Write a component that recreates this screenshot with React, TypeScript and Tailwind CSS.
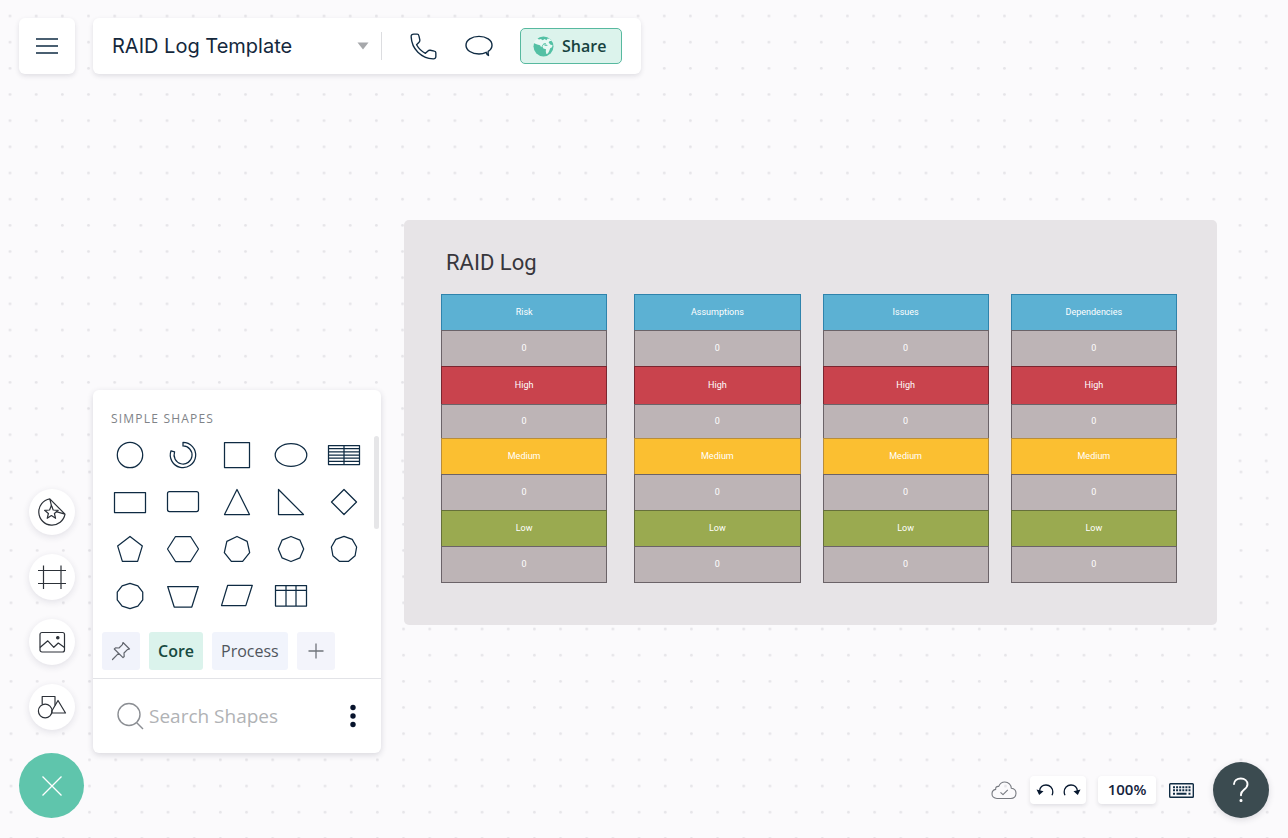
import type { ReactNode } from "react";

const INK = "#0f2b43";

function DotGrid({ id, x, y }: { id: string; x: number; y: number }) {
  return (
    <svg className="block h-full w-full" aria-hidden="true">
      <defs>
        <pattern id={id} x={x - 13} y={y - 13} width="26.17" height="26.17" patternUnits="userSpaceOnUse">
          <circle cx="13" cy="13" r="1.4" fill="#e5e4e8" />
        </pattern>
      </defs>
      <rect width="100%" height="100%" fill={`url(#${id})`} />
    </svg>
  );
}

function ngon(sides: number, rx: number, ry: number, cy = 15) {
  return Array.from({ length: sides }, (_, i) => {
    const a = (i * 2 * Math.PI) / sides - Math.PI / 2;
    return `${(18 + rx * Math.cos(a)).toFixed(2)},${(cy + ry * Math.sin(a)).toFixed(2)}`;
  }).join(" ");
}

const shapes: { name: string; art: ReactNode }[] = [
  { name: "Circle", art: <circle cx="18" cy="15" r="12.7" /> },
  { name: "Arc", art: <path d="M18 2.3A12.7 12.7 0 1 1 6 10.8L9.6 11.9A9 9 0 1 0 18 6Z" /> },
  { name: "Square", art: <rect x="5.5" y="2.5" width="25" height="25" /> },
  { name: "Ellipse", art: <ellipse cx="18" cy="15" rx="15.8" ry="11.4" /> },
  { name: "List", art: <path d="M2.5 5.5h31v19h-31zM18 5.5v19M2.5 8.7h31M2.5 11.8h31M2.5 15h31M2.5 18.2h31M2.5 21.3h31" /> },
  { name: "Rectangle", art: <rect x="2.5" y="5.5" width="31" height="20" /> },
  { name: "Rounded rectangle", art: <rect x="2.5" y="4.5" width="31" height="20" rx="2" /> },
  { name: "Triangle", art: <path d="M18 2.5L30.5 27.5H5.5Z" /> },
  { name: "Right triangle", art: <path d="M5.5 2.5V27.5H30.5Z" /> },
  { name: "Diamond", art: <path d="M18 2.5L30.5 15L18 27.5L5.5 15Z" /> },
  { name: "Pentagon", art: <polygon points={ngon(5, 13, 13.8, 16.2)} /> },
  { name: "Hexagon", art: <path d="M2.5 15L10.5 2.5H25.5L33.5 15L25.5 27.5H10.5Z" /> },
  { name: "Heptagon", art: <polygon points={ngon(7, 13, 13.1, 15.6)} /> },
  { name: "Octagon", art: <polygon points={ngon(8, 12.7, 12.5)} /> },
  { name: "Nonagon", art: <polygon points={ngon(9, 12.8, 12.9, 15.3)} /> },
  { name: "Decagon", art: <polygon points={ngon(10, 13.4, 12.6)} /> },
  { name: "Trapezoid", art: <path d="M2.7 5.5H33.3L26.8 26H9.2Z" /> },
  { name: "Parallelogram", art: <path d="M8.7 4.3H33.3L26.8 24.6H2.5Z" /> },
  { name: "Table", art: <path d="M2.5 4.5h31v20.5h-31zM2.5 9.3h31M13 4.5v20.5M23 4.5v20.5" /> },
];

type Row = { key: string; label: string; cell: string };

const rows: Row[] = [
  { key: "r1", label: "0", cell: "h-9 bg-[#bdb4b6] border-[#6b6368]" },
  { key: "r2", label: "High", cell: "h-[38px] bg-[#c9434d] border-[#7a2630]" },
  { key: "r3", label: "0", cell: "h-[34px] bg-[#bdb4b6] border-[#6b6368]" },
  { key: "r4", label: "Medium", cell: "h-9 bg-[#fbbf31] border-[#b88d3a]" },
  { key: "r5", label: "0", cell: "h-9 bg-[#bdb4b6] border-[#6b6368]" },
  { key: "r6", label: "Low", cell: "h-9 bg-[#9aaa50] border-[#66703a]" },
  { key: "r7", label: "0", cell: "h-[37px] border-b bg-[#bdb4b6] border-[#6b6368]" },
];

function RaidColumn({ title, className = "" }: { title: string; className?: string }) {
  return (
    <table className={`flex-1 basis-0 table-fixed border-separate border-spacing-0 text-center text-[9px] leading-3 text-white ${className}`}>
      <thead className="block">
        <tr className="flex">
          <th scope="col" className="flex h-9 flex-1 items-center justify-center border-x border-t border-[#2f83ac] bg-[#5cb1d3] pb-0.5 font-normal">
            {title}
          </th>
        </tr>
      </thead>
      <tbody className="block">
        {rows.map((r) => (
          <tr key={r.key} className="flex">
            <td className={`flex flex-1 items-center justify-center border-x border-t pb-0.5 ${r.cell}`}>{r.label}</td>
          </tr>
        ))}
      </tbody>
    </table>
  );
}

function RailButton({ label, children }: { label: string; children: ReactNode }) {
  return (
    <button aria-label={label} className="flex size-[46px] items-center justify-center rounded-full bg-white shadow-[0_2px_7px_rgba(40,40,70,0.12)]">
      <svg width="30" height="30" viewBox="0 0 30 30" fill="none" stroke="#2c3138" strokeWidth="1.2" strokeLinejoin="round">
        {children}
      </svg>
    </button>
  );
}

function Header() {
  return (
    <header className="flex gap-[18px]">
      <button aria-label="Menu" className="flex size-14 items-center justify-center rounded-md bg-white shadow-[0_2px_5px_rgba(40,40,60,0.13)]">
        <svg width="24" height="18" viewBox="0 0 24 18" stroke={INK} strokeWidth="1.4">
          <path d="M1 2h22M1 9h22M1 16h22" />
        </svg>
      </button>
      <div className="flex h-14 items-center rounded-md bg-white px-[19px] shadow-[0_2px_5px_rgba(40,40,60,0.13)]">
        <button className="flex w-[257px] items-center justify-between text-left font-[Inter,sans-serif] text-xl leading-6 text-[#14283c]">
          RAID Log Template
          <svg width="12" height="8" viewBox="0 0 12 8" fill="#a6a8ab" aria-hidden="true">
            <path d="M.5 .5h11L6 7.5Z" />
          </svg>
        </button>
        <span className="ml-3 h-7 w-px bg-[#dcdde0]" />
        <button aria-label="Call" className="ml-7">
          <svg className="block" width="27" height="27" viewBox="0 0 28 28" fill="none" stroke={INK} strokeWidth="1.4" strokeLinejoin="round">
            <path d="M1.2 4C1 2.2 2.2 1.2 4 1.2H7.5C8.6 1.2 9 1.8 9.2 2.8L10.2 7.2C10.4 8.2 10.1 8.9 9.4 9.6L6.8 12.2C8.8 15.8 12.2 19.2 16 21.1L18.6 18.6C19.3 17.9 20 17.7 21 17.9L25.2 18.8C26.3 19 26.8 19.6 26.8 20.6V24.3C26.8 26 25.8 26.9 24.1 26.8C11.6 26.3 1.8 16.5 1.2 4Z" />
          </svg>
        </button>
        <button aria-label="Comments" className="ml-7">
          <svg className="block" width="28" height="22" viewBox="0 0 28 22" fill="none" stroke={INK} strokeWidth="1.4" strokeLinejoin="round">
            <path d="M21.2 17.3C19.1 18.4 16.7 19 14 19C6.8 19 1 15.2 1 10.2S6.8 1.4 14 1.4S27 5.2 27 10.2C27 12.6 25.6 14.8 23.2 16.4C22.9 17.9 23.1 19.2 23.5 20.5C22.2 19.8 21.5 18.7 21.2 17.3Z" />
          </svg>
        </button>
        <button className="ml-[27px] flex h-9 w-[102px] items-center gap-2 rounded-[5px] border border-[#57b99f] bg-[#dcf3ec] pl-3 text-base font-semibold text-[#16423f]">
          <svg width="21" height="21" viewBox="0 0 21 21" aria-hidden="true">
            <circle cx="10.5" cy="10.5" r="10" fill="#53c0a4" />
            <path d="M.6 6.9C1.300 4.800 2.500 3.300 4.200 2.400L6 3.600L7.800 2.900L9.800 4.200L11.600 3L13.400 4.200L14.600 2.400L17 3L18.600 5L16.800 4.900L15.600 6.300L17.200 8.500L19.600 9.300L19 11.200L17.200 12.300L16.200 15L14.900 17.600L13.300 17.900L12.800 15.600L13 13.200L10.400 12.400L9.400 10.600L10.500 8.800L13 8.300L12.600 7.100L10.600 7.600L9.200 9.500L8.200 11.200L7 9.300L4.200 8.400Z" fill="#e9f8f4" />
            <path d="M11 9.200L13 8.500L15 9.200L13 10Z" fill="#53c0a4" />
          </svg>
          Share
        </button>
      </div>
    </header>
  );
}

function Rail() {
  return (
    <nav aria-label="Insert" className="flex w-[65px] flex-col items-center gap-[19px]">
      <RailButton label="Stickers">
        <path d="M12.8 1.9A13.2 13.2 0 1 0 28 17.2L12.8 1.9ZM12.8 1.9L15.6 13.6L28 17.2" />
        <path fill="#fff" d="M14.4 8.4L16.2 13L21.2 13.3L17.4 16.5L18.6 21.3L14.4 18.6L10.2 21.3L11.4 16.5L7.6 13.3L12.6 13Z" />
      </RailButton>
      <RailButton label="Frame">
        <path d="M1 8.5h28M1 21.5h28M6.5 3.5v23.500M24 3.500v23.500" />
      </RailButton>
      <RailButton label="Image">
        <rect x="3" y="5.5" width="24.500" height="19.500" rx="2" />
        <path d="M3 20.500L10.800 13.800L16.800 20.300L21.300 16L27.500 20.500" />
        <circle cx="20.800" cy="10.800" r="1.200" fill="#2c3138" />
      </RailButton>
      <RailButton label="Shapes">
        <path d="M5.200 12.200V4.500H18V13.500" />
        <path d="M21 8.500L28.500 21H15L14.800 19Z" />
        <circle cx="8.200" cy="19" r="6.800" />
      </RailButton>
      <button aria-label="Close" className="mt-1 flex size-[65px] items-center justify-center rounded-full bg-[#5fc5ac]">
        <svg width="22" height="22" viewBox="0 0 22 22" stroke="#fff" strokeWidth="1.3">
          <path d="M1.500 1.500L20.500 20.500M20.500 1.500L1.500 20.500" />
        </svg>
      </button>
    </nav>
  );
}

function ShapesPanel() {
  return (
    <section aria-label="Shapes" className="mb-[65px] w-72 rounded-md bg-white shadow-[0_2px_6px_rgba(40,40,60,0.16)]">
      <h2 className="pt-5 pl-[18px] text-xs leading-[18px] tracking-[1.2px] text-[#808388]">SIMPLE SHAPES</h2>
      <div className="relative px-[10px] pt-[3px]">
        <div className="grid auto-rows-[47px] grid-cols-5">
          {shapes.map((s) => (
            <button key={s.name} aria-label={s.name} className="flex items-center justify-center">
              <svg width="36" height="30" viewBox="0 0 36 30" fill="none" stroke={INK} strokeWidth="1.25" strokeLinejoin="round">
                {s.art}
              </svg>
            </button>
          ))}
        </div>
        <span className="absolute top-2 right-[2px] h-[93px] w-[5px] rounded-full bg-[#e6e6e8]" />
      </div>
      <div className="flex gap-[9px] border-b border-[#e2e3e7] px-[9px] pt-[13px] pb-2 text-base font-medium">
        <button aria-label="Pinned" className="flex h-[38px] w-[38px] items-center justify-center rounded-[3px] bg-[#f1f3fb]">
          <svg width="20" height="20" viewBox="0 0 20 20" fill="none" stroke="#62666e" strokeWidth="1.200" strokeLinejoin="round" strokeLinecap="round">
            <path d="M12 1.500L18.500 8L16.400 8.600L13 12L13.200 15.500L12 16.700L3.300 8L4.500 6.800L8 7L11.400 3.600ZM7.500 12.400L1.500 18.500" />
          </svg>
        </button>
        <button className="h-[38px] rounded-[3px] bg-[#dbf3ec] px-[9px] font-semibold text-[#174a40]">Core</button>
        <button className="h-[38px] rounded-[3px] bg-[#f1f4fc] px-[9px] text-[#50555d]">Process</button>
        <button aria-label="Add library" className="flex h-[38px] w-[38px] items-center justify-center rounded-[3px] bg-[#f3f4fb]">
          <svg width="16" height="16" viewBox="0 0 16 16" stroke="#70747b" strokeWidth="1.300">
            <path d="M8 .5v15M.5 8h15" />
          </svg>
        </button>
      </div>
      <div className="flex h-[74px] items-center pr-5 pl-6">
        <label htmlFor="shape-search" aria-label="Search Shapes">
          <svg className="block" width="27" height="28" viewBox="0 0 27 28" fill="none" stroke="#8b8e93" strokeWidth="1.400">
            <circle cx="12" cy="12.500" r="11" />
            <path d="M19.500 20.500L26 27" />
          </svg>
        </label>
        <input id="shape-search" type="search" placeholder="Search Shapes" className="ml-[5px] min-w-0 flex-1 bg-transparent text-[19px] outline-none placeholder:text-[#b0b2b5]" />
        <button aria-label="More options" className="w-4">
          <svg className="mx-auto block" width="6" height="24" viewBox="0 0 6 24" fill="#07132c">
            <circle cx="3" cy="3.500" r="2.700" />
            <circle cx="3" cy="12" r="2.700" />
            <circle cx="3" cy="20.500" r="2.700" />
          </svg>
        </button>
      </div>
    </section>
  );
}

function Board() {
  return (
    <section aria-label="RAID Log" className="mt-[146px] mr-[52px] rounded-[5px] bg-[#e7e4e7] pt-[27px] pr-10 pb-[42px] pl-[37px] font-[Roboto,sans-serif]">
      <h1 className="pl-[5px] text-[22px] leading-8 text-[#37363c]">RAID Log</h1>
      <div className="mt-[15px] flex gap-[22px]">
        <RaidColumn title="Risk" className="mr-[5px]" />
        <RaidColumn title="Assumptions" />
        <RaidColumn title="Issues" />
        <RaidColumn title="Dependencies" />
      </div>
    </section>
  );
}

function ViewTools() {
  const card = "flex h-7 items-center justify-center rounded-[4px] bg-white shadow-[0_2px_4px_rgba(40,40,60,0.12)]";
  return (
    <footer className="mt-auto flex items-center justify-end">
      <svg width="26" height="19" viewBox="0 0 26 19" fill="none" stroke="#777a80" strokeWidth="1.100" strokeLinejoin="round" role="img" aria-label="Saved">
        <path d="M6 17.500C3 17.500 1 15.600 1 12.900C1 10.500 2.500 8.800 4.700 8.400C4.300 6.400 5.700 5 7.800 5.400C8.800 2.600 11 1 13.800 1C17.500 1 20.200 3.700 20.300 7.300C23.200 7.600 25 9.600 25 12.300C25 15.300 22.900 17.500 19.800 17.500Z" />
        <path d="M9.500 11.300L12 13.700L16.800 8.800" />
      </svg>
      <div className={`${card} ml-[13px] w-14 gap-[9px]`}>
        <button aria-label="Undo">
          <svg className="block" width="18" height="14" viewBox="0 0 18 14" fill="none" stroke="#07182f" strokeWidth="1.300">
            <path d="M3.500 8C4 4.500 6.500 2 10 2C14 2 16.800 5 16.800 9C16.800 10.200 16.500 11.300 16 12.300" />
            <path d="M.5 6.500L7.500 8.200L3.200 12Z" fill="#07182f" stroke="none" />
          </svg>
        </button>
        <button aria-label="Redo">
          <svg className="block" width="18" height="14" viewBox="0 0 18 14" fill="none" stroke="#07182f" strokeWidth="1.300">
            <path d="M14.500 8C14 4.500 11.500 2 8 2C4 2 1.200 5 1.200 9C1.200 10.200 1.500 11.300 2 12.300" />
            <path d="M17.500 6.500L10.500 8.200L14.800 12Z" fill="#07182f" stroke="none" />
          </svg>
        </button>
      </div>
      <button className={`${card} ml-3 w-[58px] pb-0.5 text-[15px] font-semibold text-[#14233c]`}>100%</button>
      <button aria-label="Keyboard shortcuts" className="ml-[13px]">
        <svg className="block" width="25" height="15" viewBox="0 0 25 15" fill="none" stroke={INK}>
          <rect x=".7" y=".7" width="23.600" height="13.600" rx=".8" strokeWidth="1.400" />
          <path d="M4 4.200h17.500M4 7.300h17.500" strokeWidth="1.900" strokeDasharray="2 1.100" />
          <path d="M4 10.700h2M7.500 10.700h10M19.500 10.700h2" strokeWidth="1.900" />
        </svg>
      </button>
      <button aria-label="Help" className="ml-[19px] flex size-14 items-center justify-center rounded-full bg-[#3b4b50] shadow-[0_2px_6px_rgba(40,40,60,0.15)]">
        <svg width="18" height="26" viewBox="0 0 18 26" fill="none" stroke="#fff" strokeWidth="1.900" strokeLinecap="round">
          <path d="M2 7C2.200 3.700 5 1.500 8.800 1.500C12.800 1.500 15.500 3.900 15.500 7.200C15.500 9.700 14.100 11 12.200 12.500C10 14.200 9 15.200 9 17.500V18.300" />
          <circle cx="9" cy="23.500" r="1" fill="#fff" stroke="none" />
          <circle cx="9" cy="23.500" r=".6" />
        </svg>
      </button>
    </footer>
  );
}

export default function App() {
  return (
    <div className="relative isolate flex min-h-screen flex-col bg-[#fbfafc] px-[19px] pt-[18px] pb-5 font-['Open_Sans','Noto_Sans',sans-serif]">
      <div className="absolute inset-0 -z-10 flex flex-col">
        <div className="h-[466px]">
          <DotGrid id="dots-upper" x={10} y={16} />
        </div>
        <div className="flex-1">
          <DotGrid id="dots-lower" x={11} y={6} />
        </div>
      </div>
      <Header />
      <main className="flex flex-1 gap-[23px]">
        <div className="flex items-end gap-[9px]">
          <Rail />
          <ShapesPanel />
        </div>
        <div className="flex min-w-0 flex-1 flex-col">
          <Board />
          <ViewTools />
        </div>
      </main>
    </div>
  );
}
